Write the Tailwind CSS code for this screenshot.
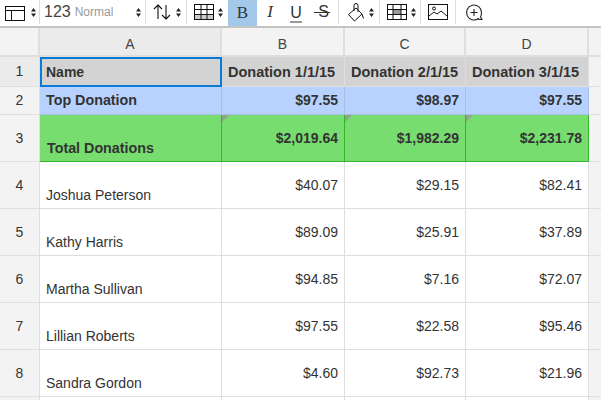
<!DOCTYPE html>
<html lang="en">
<head>
<meta charset="UTF-8">
<title>Donations</title>
<script src="https://cdn.jsdelivr.net/npm/@tailwindcss/browser@4"></script>
</head>
<body class="bg-white h-[400px] overflow-hidden font-['Liberation_Sans',Arial,sans-serif] text-[14px] text-[#333]">
<!-- toolbar -->
<div class="flex h-[28px] items-stretch border-b-2 border-[#c4c4c4] text-black">
  <div class="w-[40px] h-[24px] border-r border-[#ddd] flex items-center pl-[5px] gap-[5px]">
    <svg width="21" height="19" viewBox="0 0 21 19" fill="none" stroke="#111"><rect x=".5" y="3.5" width="19" height="14"/><path d="M.5 7.5h19M6.5 7.5v10"/></svg>
    <svg width="5" height="9" viewBox="0 0 5 9" fill="#222"><path d="M0 3.5 2.5 0 5 3.5zM0 5.5 2.5 9 5 5.5z"/></svg>
  </div>
  <div class="w-[106px] h-[24px] border-r border-[#ddd] flex items-center pl-[4px] relative">
    <span class="text-[16px] text-[#444]">123</span>
    <span class="ml-[4px] text-[12px] text-[#999]">Normal</span>
    <svg class="absolute left-[96px] top-[8px]" width="5" height="9" viewBox="0 0 5 9" fill="#222"><path d="M0 3.5 2.5 0 5 3.5zM0 5.5 2.5 9 5 5.5z"/></svg>
  </div>
  <div class="w-[41px] h-[24px] border-r border-[#ddd] flex items-center pl-[7px] gap-[5px]">
    <svg width="18" height="16" viewBox="0 0 18 16" fill="none" stroke="#111" stroke-width="1.1"><path d="M5 15V1M1 5l4-4 4 4M13 1v14M9 11l4 4 4-4"/></svg>
    <svg width="5" height="9" viewBox="0 0 5 9" fill="#222"><path d="M0 3.5 2.5 0 5 3.5zM0 5.5 2.5 9 5 5.5z"/></svg>
  </div>
  <div class="w-[41px] h-[24px] flex items-center pl-[7px] gap-[4px]">
    <svg width="20" height="16" viewBox="0 0 20 16" fill="none" stroke="#111"><rect x="0" y="10" width="20" height="5" fill="#ccc" stroke="none"/><rect x=".5" y=".5" width="19" height="15"/><path d="M.5 5.5h19M.5 10.5h19M7 .5v15M13 .5v15"/></svg>
    <svg width="5" height="9" viewBox="0 0 5 9" fill="#222"><path d="M0 3.5 2.5 0 5 3.5zM0 5.5 2.5 9 5 5.5z"/></svg>
  </div>
  <div class="w-[29px] h-[26px] bg-[#a3c8ea] flex items-center justify-center text-[17px] font-['Liberation_Serif',serif] text-[#333]">B</div>
  <div class="w-[26px] h-[24px] flex items-center justify-center text-[17px] italic font-['Liberation_Serif',serif] text-[#333]">I</div>
  <div class="w-[26px] h-[24px] flex items-center justify-center">
    <span class="block h-[19px] w-[12px] mt-[3px] border-b-2 border-[#999] text-[16px] leading-[17px] text-center text-[#333]">U</span>
  </div>
  <div class="relative w-[30px] h-[24px] border-r border-[#ddd] flex items-center justify-center text-[16px] text-[#333]">S<span class="absolute left-[5px] top-[12px] w-[16px] h-px bg-[#333]"></span></div>
  <div class="w-[41px] h-[24px] border-r border-[#ddd] flex items-center pl-[8px] gap-[4px]">
    <svg width="18" height="20" viewBox="0 0 18 20" fill="none" stroke="#111"><path d="M9 6 1.500 12.500 7.500 19 15 12z"/><path d="M7 9V3.500a2 2 0 0 1 4 0V10M15 12l1.500 4.500"/></svg>
    <svg width="5" height="9" viewBox="0 0 5 9" fill="#222"><path d="M0 3.500 2.500 0 5 3.500zM0 5.500 2.500 9 5 5.500z"/></svg>
  </div>
  <div class="w-[41px] h-[24px] border-r border-[#ddd] flex items-center pl-[7px] gap-[4px]">
    <svg width="20" height="16" viewBox="0 0 20 16" fill="none" stroke="#111"><rect x="6" y="5" width="8" height="5" fill="#999" stroke="none"/><rect x=".5" y=".5" width="19" height="15"/><path d="M.5 5.500h19M.5 10.500h19M6 .5v15M14 .5v15"/></svg>
    <svg width="5" height="9" viewBox="0 0 5 9" fill="#222"><path d="M0 3.500 2.500 0 5 3.500zM0 5.500 2.500 9 5 5.500z"/></svg>
  </div>
  <div class="w-[35px] h-[24px] border-r border-[#ddd] flex items-center pl-[7px]">
    <svg width="20" height="16" viewBox="0 0 20 16" fill="none" stroke="#111"><rect x=".5" y=".5" width="19" height="15"/><circle cx="6" cy="4.500" r="1.500"/><path d="M1 12l5-4 3 2 4-3 6 5"/></svg>
  </div>
  <div class="h-[24px] flex items-center pl-[9px]">
    <svg width="19" height="19" viewBox="0 0 19 19" fill="none" stroke="#222" stroke-width="1.100"><path d="M13.500 15.500A7.500 7.500 0 1 1 16.500 9.500c0 2-.3 3.500-1 4.500l1.500 2.500h-3z"/><path d="M9 6v7M5.500 9.500h7"/></svg>
  </div>
</div>
<!-- sheet -->
<div class="grid grid-cols-[40px_182px_123px_121px_123px_12px] grid-rows-[29px_30px_28px_47px_47px_47px_47px_47px_47px_20px] bg-[#f3f3f3]">
  <div class="border-r-2 border-b-2 border-[#dedede]"></div>
  <div class="border-r-2 border-b-2 border-[#dedede] bg-[#ebebeb] flex items-center justify-center pt-[6px] text-[#444]">A</div>
  <div class="border-r-2 border-b-2 border-[#dedede] flex items-center justify-center pt-[6px] text-[#444]">B</div>
  <div class="border-r-2 border-b-2 border-[#dedede] flex items-center justify-center pt-[6px] text-[#444]">C</div>
  <div class="border-r-2 border-b-2 border-[#dedede] flex items-center justify-center pt-[6px] text-[#444]">D</div>
  <div class="border-b-2 border-[#dedede]"></div>

  <div class="border-r border-b border-[#dedede] bg-[#ebebeb] flex items-center justify-center">1</div>
  <div class="border-2 border-[#0b7bd6] bg-[#d3d3d3] font-bold flex items-center px-[4px]">Name</div>
  <div class="border-r border-b border-[#dedede] bg-[#d3d3d3] font-bold text-[14.5px] flex items-center px-[6px] pt-[2px]">Donation 1/1/15</div>
  <div class="border-r border-b border-[#dedede] bg-[#d3d3d3] font-bold text-[14.5px] flex items-center px-[6px] pt-[2px]">Donation 2/1/15</div>
  <div class="border-r border-b border-[#dedede] bg-[#d3d3d3] font-bold text-[14.5px] flex items-center px-[6px] pt-[2px]">Donation 3/1/15</div>
  <div class="border-b border-[#dedede]"></div>

  <div class="border-r border-b border-[#dedede] flex items-center justify-center">2</div>
  <div class="border-r border-b border-[#a9bee0] bg-[#b7d2ff] font-bold text-[14.3px] flex items-center px-[6px]">Top Donation</div>
  <div class="border-r border-b border-[#a9bee0] bg-[#b7d2ff] font-bold flex items-center justify-end px-[6px]">$97.55</div>
  <div class="border-r border-b border-[#a9bee0] bg-[#b7d2ff] font-bold flex items-center justify-end px-[6px]">$98.97</div>
  <div class="border-r border-b border-[#a9bee0] bg-[#b7d2ff] font-bold flex items-center justify-end px-[6px]">$97.55</div>
  <div class="border-b border-[#dedede]"></div>

  <div class="border-r border-b border-[#dedede] flex items-center justify-center">3</div>
  <div class="border-r border-b border-[#35b52a] bg-[#77dd6f] font-bold text-[14.3px] flex items-end px-[7px] pb-[2px]">Total Donations</div>
  <div class="relative border-r border-b border-[#35b52a] bg-[#77dd6f] font-bold flex items-center justify-end px-[6px]"><span class="absolute left-0 top-0 border-t-[7px] border-r-[7px] border-t-[#8fa58c] border-r-transparent"></span>$2,019.64</div>
  <div class="relative border-r border-b border-[#35b52a] bg-[#77dd6f] font-bold flex items-center justify-end px-[6px]"><span class="absolute left-0 top-0 border-t-[7px] border-r-[7px] border-t-[#8fa58c] border-r-transparent"></span>$1,982.29</div>
  <div class="relative border-r border-b border-[#35b52a] bg-[#77dd6f] font-bold flex items-center justify-end px-[6px]"><span class="absolute left-0 top-0 border-t-[7px] border-r-[7px] border-t-[#8fa58c] border-r-transparent"></span>$2,231.78</div>
  <div class="border-b border-[#dedede]"></div>

  <div class="border-r border-b border-[#dedede] flex items-center justify-center">4</div>
  <div class="bg-white border-r border-b border-[#dedede] flex items-end px-[6px] pb-[2px]">Joshua Peterson</div>
  <div class="bg-white border-r border-b border-[#dedede] flex items-center justify-end px-[6px]">$40.07</div>
  <div class="bg-white border-r border-b border-[#dedede] flex items-center justify-end px-[6px]">$29.15</div>
  <div class="bg-white border-r border-b border-[#dedede] flex items-center justify-end px-[6px]">$82.41</div>
  <div class="border-b border-[#dedede]"></div>

  <div class="border-r border-b border-[#dedede] flex items-center justify-center">5</div>
  <div class="bg-white border-r border-b border-[#dedede] flex items-end px-[6px] pb-[2px]">Kathy Harris</div>
  <div class="bg-white border-r border-b border-[#dedede] flex items-center justify-end px-[6px]">$89.09</div>
  <div class="bg-white border-r border-b border-[#dedede] flex items-center justify-end px-[6px]">$25.91</div>
  <div class="bg-white border-r border-b border-[#dedede] flex items-center justify-end px-[6px]">$37.89</div>
  <div class="border-b border-[#dedede]"></div>

  <div class="border-r border-b border-[#dedede] flex items-center justify-center">6</div>
  <div class="bg-white border-r border-b border-[#dedede] flex items-end px-[6px] pb-[2px]">Martha Sullivan</div>
  <div class="bg-white border-r border-b border-[#dedede] flex items-center justify-end px-[6px]">$94.85</div>
  <div class="bg-white border-r border-b border-[#dedede] flex items-center justify-end px-[6px]">$7.16</div>
  <div class="bg-white border-r border-b border-[#dedede] flex items-center justify-end px-[6px]">$72.07</div>
  <div class="border-b border-[#dedede]"></div>

  <div class="border-r border-b border-[#dedede] flex items-center justify-center">7</div>
  <div class="bg-white border-r border-b border-[#dedede] flex items-end px-[6px] pb-[2px]">Lillian Roberts</div>
  <div class="bg-white border-r border-b border-[#dedede] flex items-center justify-end px-[6px]">$97.55</div>
  <div class="bg-white border-r border-b border-[#dedede] flex items-center justify-end px-[6px]">$22.58</div>
  <div class="bg-white border-r border-b border-[#dedede] flex items-center justify-end px-[6px]">$95.46</div>
  <div class="border-b border-[#dedede]"></div>

  <div class="border-r border-b border-[#dedede] flex items-center justify-center">8</div>
  <div class="bg-white border-r border-b border-[#dedede] flex items-end px-[6px] pb-[2px]">Sandra Gordon</div>
  <div class="bg-white border-r border-b border-[#dedede] flex items-center justify-end px-[6px]">$4.60</div>
  <div class="bg-white border-r border-b border-[#dedede] flex items-center justify-end px-[6px]">$92.73</div>
  <div class="bg-white border-r border-b border-[#dedede] flex items-center justify-end px-[6px]">$21.96</div>
  <div class="border-b border-[#dedede]"></div>

  <div class="border-r border-[#dedede]"></div>
  <div class="bg-white border-r border-[#dedede]"></div>
  <div class="bg-white border-r border-[#dedede]"></div>
  <div class="bg-white border-r border-[#dedede]"></div>
  <div class="bg-white border-r border-[#dedede]"></div>
  <div></div>
</div>
</body>
</html>
